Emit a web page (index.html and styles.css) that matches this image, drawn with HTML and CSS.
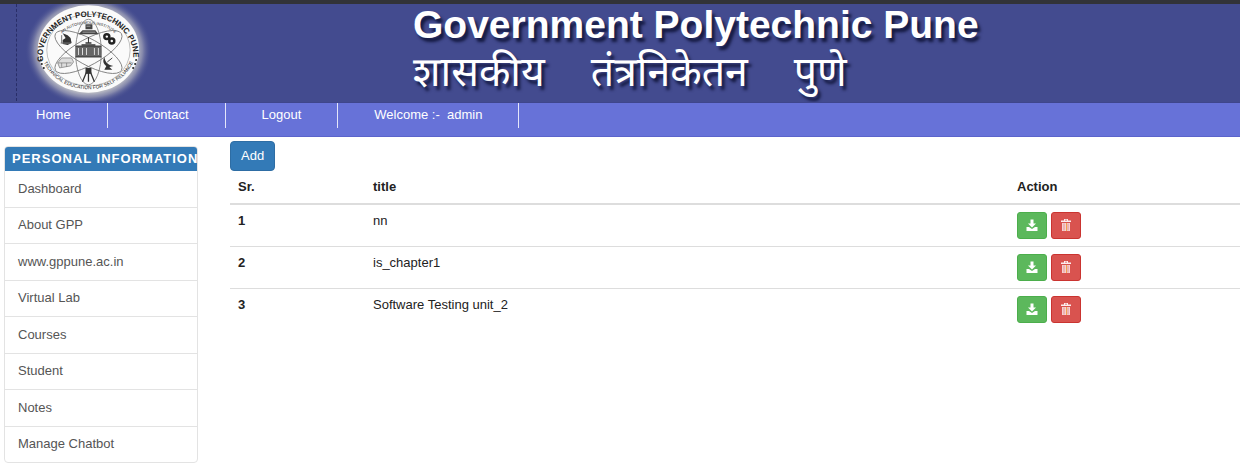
FILE: index.html
```html
<!DOCTYPE html>
<html lang="en">
<head>
<meta charset="utf-8">
<title>Government Polytechnic Pune - Notes</title>
<link rel="stylesheet" href="styles.css">
</head>
<body>
<svg class="defs" aria-hidden="true">
  <symbol id="download" viewBox="0 0 12 12"><path fill="#fff" d="M4.500 0h3v4h2.500L6 8 2 4h2.500zM.5 7.500H3l3 2 3-2h2.500v4H.5z"/></symbol>
  <symbol id="trash" viewBox="0 0 12 13"><path fill="#fff" fill-opacity=".9" d="M4 0h4v1.500h3v1.500H1V1.500h3zm1 .8v.7h2V.8z"/><path fill="#f6d2d2" d="M2 4h8v8H2z"/><path stroke="#e07a76" stroke-width=".7" d="M4 4.500v7M8 4.500v7"/><path stroke="#f2a14e" d="M6.500 4v8"/></symbol>
</svg>
<header class="banner">
  <div class="brand">
    <svg class="seal" viewBox="0 0 134 97" role="img" aria-label="Government Polytechnic Pune seal">
      <defs>
        <radialGradient id="glow"><stop offset=".7" stop-color="#eeeedc"/><stop offset=".85" stop-color="#b4b4c0" stop-opacity=".6"/><stop offset="1" stop-color="#434b8f" stop-opacity="0"/></radialGradient>
        <path id="top" d="M26.600 57A45.500 38.500 0 1 1 117 53"/>
        <path id="mid" d="M37 42A36 29 0 0 1 107 42"/>
        <path id="low" d="M25 52A48 42 0 0 0 119 52"/>
      </defs>
      <ellipse cx="72" cy="46" rx="64" ry="56" fill="url(#glow)"/>
      <ellipse cx="72" cy="45" rx="51" ry="44" fill="#fafafa"/>
      <ellipse cx="72" cy="46" rx="42" ry="36" fill="none" stroke="#999" stroke-width=".6"/>
      <g class="seal-text">
        <text class="seal-name"><textPath href="#top" startOffset="50%" text-anchor="middle">GOVERNMENT POLYTECHNIC PUNE</textPath></text>
        <text class="seal-small"><textPath href="#mid" startOffset="50%" text-anchor="middle">AN AUTONOMOUS INSTITUTE</textPath></text>
        <text class="seal-low"><textPath href="#low" startOffset="50%" text-anchor="middle">TECHNICAL EDUCATION FOR SELF RELIANCE</textPath></text>
      </g>
      <g fill="none" stroke="#777" stroke-width=".8">
        <ellipse cx="72" cy="48" rx="13" ry="33"/>
        <ellipse cx="72" cy="48" rx="38" ry="13" transform="rotate(29 72 48)"/>
        <ellipse cx="72" cy="48" rx="38" ry="13" transform="rotate(-29 72 48)"/>
      </g>
      <path fill="#666" d="M59 42h6v-2h4v-2h6v2h4v2h6v11H59z"/>
      <path stroke="#ddd" d="M62 44v7M66 44v7M70 44v7M78 44v7M82 44v7"/><path stroke="#333" d="M72 33v6M59 42h26M59 53h26"/>
      <path fill="#444" d="M69 20h7v5h-7zM66 26h13l3 4H62z"/><path stroke="#ddd" stroke-width=".6" d="M66 28h13M70 22h4"/>
      <path fill="#333" d="M46 29l5 2 3 3 1 5-4 2-5-1v-4l3-2z"/><path stroke="#777" d="M44 39h10M45 31v8"/>
      <g fill="none" stroke="#222" stroke-width="2.500"><circle cx="90.500" cy="32.500" r="2.500"/><circle cx="95.500" cy="37" r="2.500"/></g>
      <path fill="#ddd" stroke="#777" stroke-width=".7" d="M41 59l4-5h10l2 4-3 4-11 2zM41 59h14M45 59v4M50 59v4"/>
      <path fill="#333" d="M88 53c1 6 4 8 9 9l-4 1 3 3h-8l2-4c-3-2-4-5-2-9z"/><path stroke="#444" d="M91 58l5-4"/>
      <path fill="none" stroke="#333" stroke-width="1.300" d="M71 66l-5 12M72 65v13M73 66l5 12"/><path fill="#333" d="M69 64h6v6h-6z"/>
      <g fill="#222"><circle cx="24" cy="56" r="1"/><circle cx="25" cy="60" r="1"/><circle cx="27" cy="64" r="1"/><circle cx="120" cy="56" r="1"/><circle cx="119" cy="60" r="1"/><circle cx="117" cy="64" r="1"/></g>
    </svg>
  </div>
  <div class="titles">
    <h1>Government Polytechnic Pune</h1>
    <p lang="mr"><span>शासकीय</span> <span>तंत्रनिकेतन</span> <span>पुणे</span></p>
  </div>
</header>
<nav class="menu">
  <a href="#">Home</a><a href="#">Contact</a><a href="#">Logout</a><a href="#">Welcome :-&nbsp; admin</a>
</nav>
<div class="page">
  <aside class="panel">
    <h2>PERSONAL INFORMATION</h2>
    <ul>
      <li><a href="#">Dashboard</a></li>
      <li><a href="#">About GPP</a></li>
      <li><a href="#">www.gppune.ac.in</a></li>
      <li><a href="#">Virtual Lab</a></li>
      <li><a href="#">Courses</a></li>
      <li><a href="#">Student</a></li>
      <li><a href="#">Notes</a></li>
      <li><a href="#">Manage Chatbot</a></li>
    </ul>
  </aside>
  <main>
    <button class="add" type="button">Add</button>
    <table>
      <thead><tr><th class="num" scope="col">Sr.</th><th scope="col">title</th><th class="act" scope="col">Action</th></tr></thead>
      <tbody>
        <tr><th scope="row">1</th><td>nn</td><td><div class="actions"><button class="get" type="button" aria-label="Download"><svg><use href="#download"/></svg></button><button class="del" type="button" aria-label="Delete"><svg><use href="#trash"/></svg></button></div></td></tr>
        <tr><th scope="row">2</th><td>is_chapter1</td><td><div class="actions"><button class="get" type="button" aria-label="Download"><svg><use href="#download"/></svg></button><button class="del" type="button" aria-label="Delete"><svg><use href="#trash"/></svg></button></div></td></tr>
        <tr><th scope="row">3</th><td>Software Testing unit_2</td><td><div class="actions"><button class="get" type="button" aria-label="Download"><svg><use href="#download"/></svg></button><button class="del" type="button" aria-label="Delete"><svg><use href="#trash"/></svg></button></div></td></tr>
      </tbody>
    </table>
  </main>
</div>
</body>
</html>
```
FILE: styles.css
```css
* { box-sizing: border-box; }
body { margin: 0; background: #fff; color: #222; font: 13px/18px "Liberation Sans", Arial, sans-serif; }
a { color: inherit; text-decoration: none; }
button { font: inherit; color: #fff; }
.defs { display: block; width: 0; height: 0; }

.banner { display: flex; height: 103px; border-top: 4px solid #323338; border-bottom: 1px solid #3f468c; background: #434b8f; color: #fff; overflow: hidden; }
.brand { flex: 0 0 413px; padding-left: 16px; }
.seal { display: block; width: 134px; height: 97px; border-left: 1px dashed #292e68; overflow: hidden; }
.seal-text { fill: #222; font-family: "Liberation Sans", Arial, sans-serif; }
.seal-name { font-size: 8px; font-weight: bold; }
.seal-small { font-size: 4px; }
.seal-low { font-size: 5px; }
.titles { text-shadow: 3px 4px 3px #151a42; white-space: nowrap; }
h1 { margin: 0; font-size: 39px; line-height: 42px; }
.titles p { display: flex; gap: 46px; margin: 0; font: 41px/60px "Noto Sans Devanagari", "Noto Sans", sans-serif; }

.menu { display: flex; align-items: flex-start; height: 34px; background: #6772d8; border-bottom: 1px solid #5b64cb; color: #fff; }
.menu a { padding: 3px 36px 4px; border-right: 1px solid #e4e6fa; }

.page { display: flex; align-items: flex-start; gap: 32px; padding-left: 4px; }
.panel { flex: 0 0 194px; margin-top: 9px; border: 1px solid #e3e3e3; border-radius: 4px; overflow: hidden; }
h2 { margin: 0; padding-left: 7px; background: #337ab7; color: #fff; font-size: 13px; line-height: 24px; letter-spacing: 1px; white-space: nowrap; }
.panel ul { display: flex; flex-direction: column; min-height: 291px; margin: 0; padding: 0; list-style: none; color: #555; }
.panel li { display: flex; flex: 1; align-items: center; padding-left: 13px; border-top: 1px solid #e3e3e3; }
.panel li:first-child { border-top: 0; }

main { flex: 1; padding-top: 4px; }
.add { display: block; padding: 5px 10px; border: 1px solid #2e6da4; border-radius: 4px; background: #337ab7; }
table { width: 100%; border-collapse: collapse; table-layout: fixed; }
th, td { padding: 7px 8px; text-align: left; vertical-align: top; border-top: 1px solid #ddd; }
thead th { border-top: 0; border-bottom: 2px solid #ddd; }
.num { width: 135px; }
.act { width: 231px; }
.actions { display: flex; gap: 4px; }
.actions button { display: grid; place-items: center; width: 30px; height: 27px; padding: 0; border-radius: 3px; }
.actions svg { width: 12px; height: 13px; }
.get { border: 1px solid #4cae4c; background: #5cb85c; }
.del { border: 1px solid #ca3430; background: #d9534f; }
```
